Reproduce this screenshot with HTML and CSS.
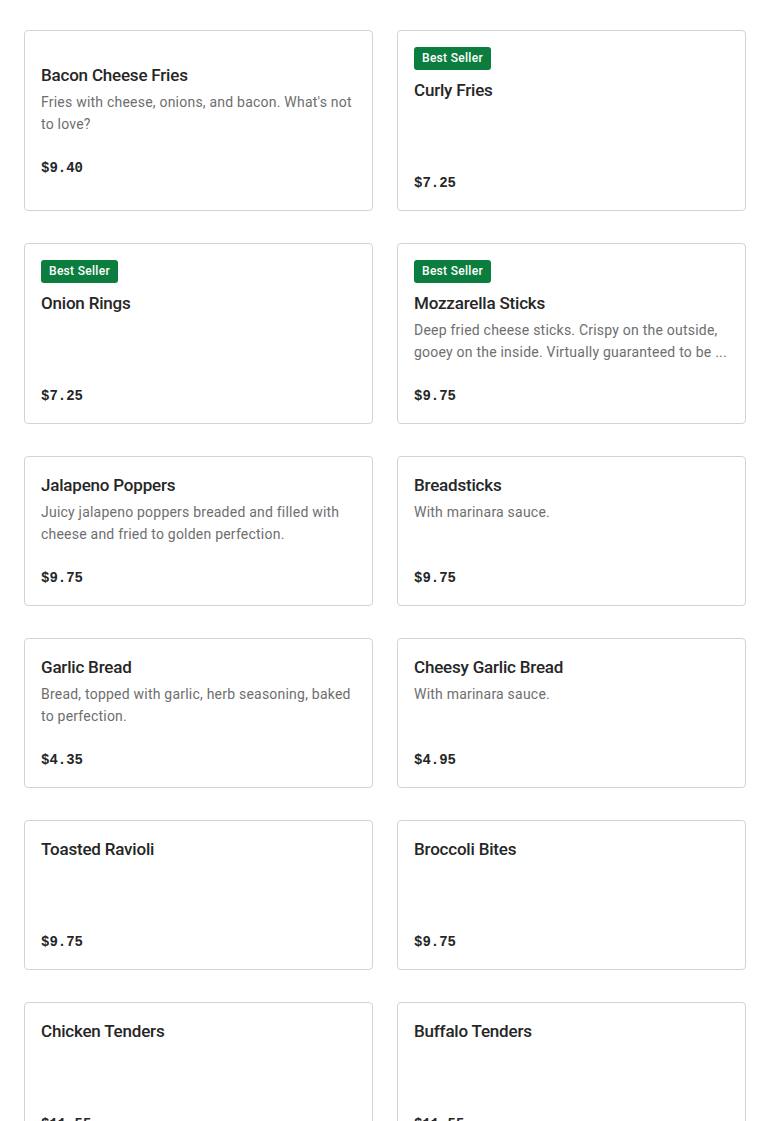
FILE: index.html
```html
<!DOCTYPE html>
<html lang="en">
<head>
<meta charset="utf-8">
<title>Menu</title>
<link rel="stylesheet" href="styles.css">
</head>
<body>
<main class="grid">
  <div class="card">
    <div class="title">Bacon Cheese Fries</div>
    <div class="desc">Fries with cheese, onions, and bacon. What's not to love?</div>
    <div class="price">$9.40</div>
  </div>
  <div class="card">
    <span class="badge">Best Seller</span>
    <div class="title">Curly Fries</div>
    <div class="desc"></div>
    <div class="price">$7.25</div>
  </div>
  <div class="card">
    <span class="badge">Best Seller</span>
    <div class="title">Onion Rings</div>
    <div class="desc"></div>
    <div class="price">$7.25</div>
  </div>
  <div class="card">
    <span class="badge">Best Seller</span>
    <div class="title">Mozzarella Sticks</div>
    <div class="desc">Deep fried cheese sticks. Crispy on the outside, gooey on the inside. Virtually guaranteed to be ...</div>
    <div class="price">$9.75</div>
  </div>
  <div class="card">
    <div class="title">Jalapeno Poppers</div>
    <div class="desc">Juicy jalapeno poppers breaded and filled with cheese and fried to golden perfection.</div>
    <div class="price">$9.75</div>
  </div>
  <div class="card">
    <div class="title">Breadsticks</div>
    <div class="desc">With marinara sauce.</div>
    <div class="price">$9.75</div>
  </div>
  <div class="card">
    <div class="title">Garlic Bread</div>
    <div class="desc">Bread, topped with garlic, herb seasoning, baked to perfection.</div>
    <div class="price">$4.35</div>
  </div>
  <div class="card">
    <div class="title">Cheesy Garlic Bread</div>
    <div class="desc">With marinara sauce.</div>
    <div class="price">$4.95</div>
  </div>
  <div class="card">
    <div class="title">Toasted Ravioli</div>
    <div class="desc"></div>
    <div class="price">$9.75</div>
  </div>
  <div class="card">
    <div class="title">Broccoli Bites</div>
    <div class="desc"></div>
    <div class="price">$9.75</div>
  </div>
  <div class="card">
    <div class="title">Chicken Tenders</div>
    <div class="desc"></div>
    <div class="price">$11.55</div>
  </div>
  <div class="card">
    <div class="title">Buffalo Tenders</div>
    <div class="desc"></div>
    <div class="price">$11.55</div>
  </div>
</main>
</body>
</html>
```

FILE: styles.css
```css
html, body {
  margin: 0;
  padding: 0;
  background: #ffffff;
}

body {
  font-family: Roboto, "Liberation Sans", Arial, sans-serif;
  color: #2a2a2a;
}

.grid {
  display: grid;
  grid-template-columns: 1fr 1fr;
  column-gap: 24px;
  row-gap: 32px;
  padding: 30px 24px 40px;
}

.card {
  display: flex;
  flex-direction: column;
  justify-content: center;
  border: 1px solid #d3d3d3;
  border-radius: 4px;
  padding: 16px 16px 15px;
  background: #fff;
}

.badge {
  align-self: flex-start;
  height: 23px;
  line-height: 23px;
  padding: 0 8px;
  margin-bottom: 8px;
  border-radius: 3px;
  background: #0b7d3e;
  color: #ffffff;
  font-size: 12px;
  font-weight: 500;
  letter-spacing: 0.3px;
}

.title {
  font-size: 17px;
  font-weight: 500;
  line-height: 24px;
  letter-spacing: -0.2px;
  color: #262626;
}

.desc {
  margin-top: 4px;
  min-height: 44px;
  font-size: 14px;
  line-height: 22px;
  letter-spacing: 0.22px;
  color: #6e6e6e;
  display: -webkit-box;
  -webkit-line-clamp: 2;
  -webkit-box-orient: vertical;
  overflow: hidden;
}

.price {
  margin-top: 21px;
  font-family: "Liberation Mono", "DejaVu Sans Mono", monospace;
  font-weight: 700;
  font-size: 14px;
  line-height: 24px;
  color: #262626;
}
```
